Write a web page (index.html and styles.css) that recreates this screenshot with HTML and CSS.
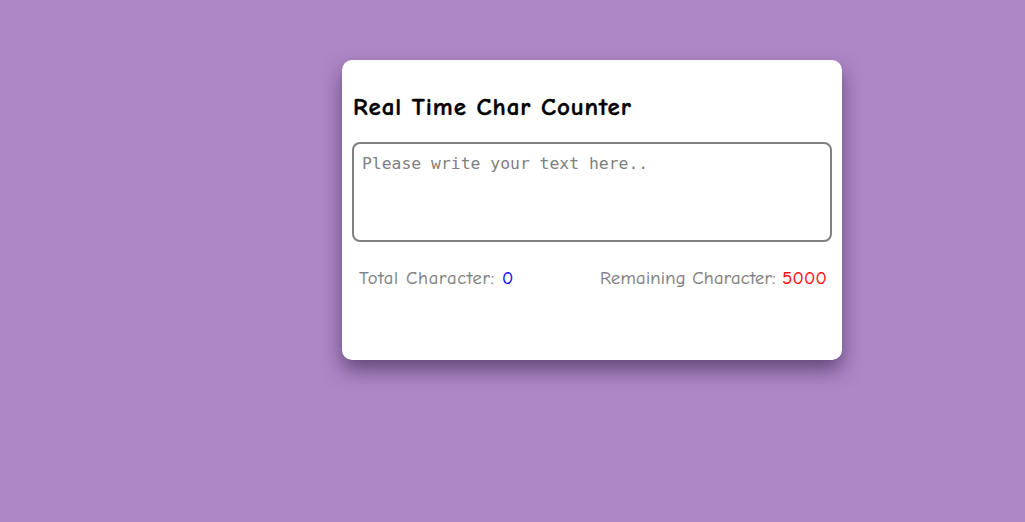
FILE: index.html
```html
<!DOCTYPE html>
<html lang="en">
<head>
<meta charset="utf-8">
<title>Real Time Char Counter</title>
<link rel="stylesheet" href="styles.css">
</head>
<body>
<main class="page">
  <section class="card">
    <h1 class="title">Real Time Char Counter</h1>
    <textarea class="input" placeholder="Please write your text here.."></textarea>
    <div class="stats">
      <p class="stat stat-total">Total Character: <span class="total">0</span></p>
      <p class="stat stat-remaining">Remaining Character: <span class="remaining">5000</span></p>
    </div>
  </section>
</main>
</body>
</html>
```

FILE: styles.css
```css
html, body {
  margin: 0;
  padding: 0;
}
body {
  background: #ae87c6;
  font-family: "Comic Sans MS", "Comic Neue", "Open Sans", "Noto Sans", sans-serif;
  min-height: 522px;
}
.page {
  padding: 60px 0 0 342px;
}
.card {
  width: 500px;
  height: 300px;
  box-sizing: border-box;
  background: #fff;
  border-radius: 10px;
  padding: 32px 10px 10px;
  box-shadow: 0 10px 20px rgba(40, 20, 60, 0.55);
  display: flex;
  flex-direction: column;
}
.title {
  margin: 0 0 20px 1px;
  font-size: 25px;
  letter-spacing: 0.9px;
  line-height: 30px;
  font-weight: 700;
  -webkit-text-stroke: 0.4px #000;
  color: #000;
  height: 30px;
}
.input {
  width: 480px;
  height: 100px;
  box-sizing: border-box;
  border: 2px solid #808080;
  border-radius: 8px;
  padding: 10px 8px 8px;
  font-family: "DejaVu Sans Mono", "Liberation Mono", monospace;
  font-size: 16.4px;
  line-height: 1.2;
  resize: none;
  outline: none;
  color: #333;
}
.input::placeholder {
  color: #808080;
}
.stats {
  margin-top: 24px;
  padding: 0 5px 0 7px;
  display: flex;
  justify-content: space-between;
}
.stat {
  margin: 0;
  font-size: 18.5px;
  line-height: 24px;
  color: #808080;
  -webkit-text-stroke: 0.2px currentColor;
}
.stat-total {
  letter-spacing: 0.8px;
}
.stat-remaining {
  letter-spacing: 0.25px;
}
.total {
  color: #0000ff;
}
.remaining {
  color: #ff0000;
}
```
